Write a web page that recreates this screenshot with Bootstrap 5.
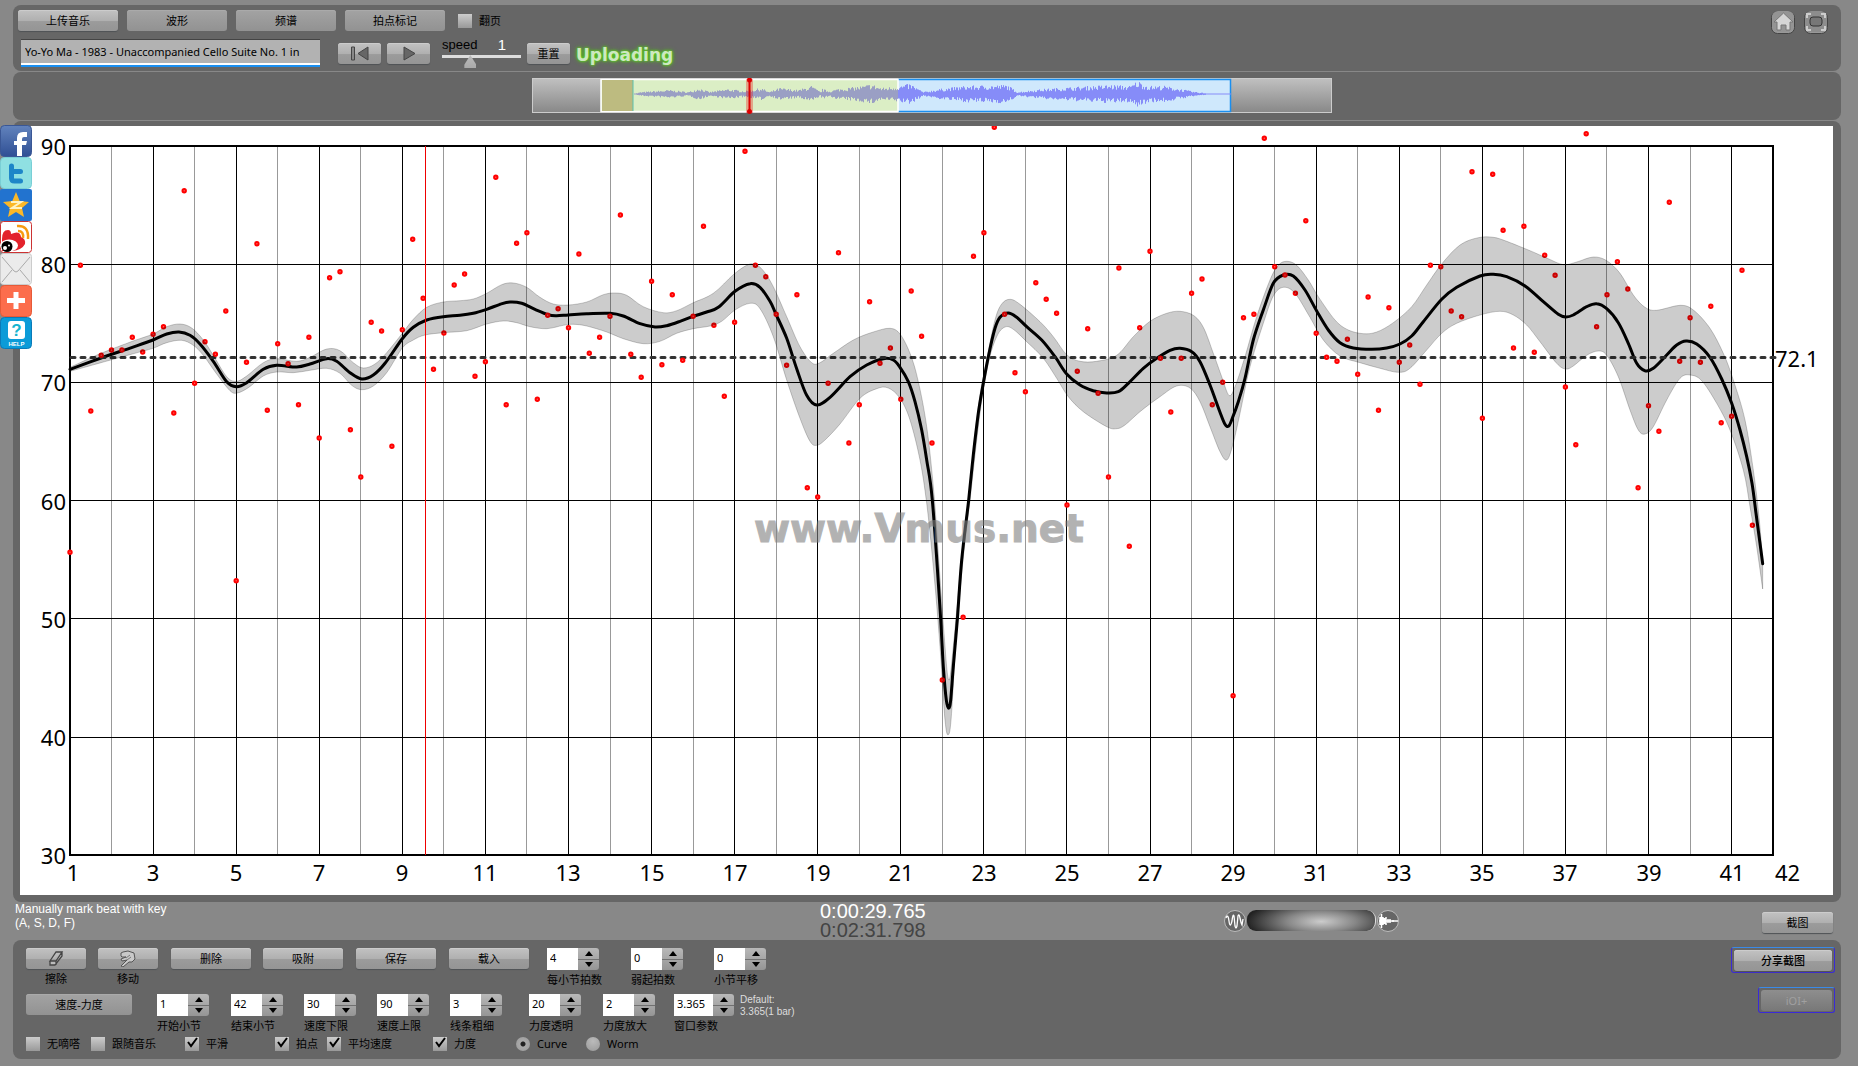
<!DOCTYPE html>
<html lang="zh-CN">
<head>
<meta charset="utf-8">
<meta name="viewport" content="width=device-width, initial-scale=1">
<title>Vmus.net</title>
<link rel="stylesheet" href="https://cdn.jsdelivr.net/npm/bootstrap@5.3.0/dist/css/bootstrap.min.css">
<style>
:root{--ui:"Noto Sans","Noto Sans CJK SC",sans-serif}
body{background:#888;font:11px/16px var(--ui);color:#000;padding:5px 17px 7px 13px}
.pane{background:#666;border-radius:8px}
.gbtn{height:21px;padding:0;border:0;border-radius:3px;font-size:11px;line-height:20px;color:#000;
 background:linear-gradient(#c2c2c2,#b0b0b0 50%,#9b9b9b 55%,#959595);box-shadow:inset 0 1px 0 #ccc,0 1px 1px #4f5356}
.gbtn:hover{color:#000;background:#c4c4c4}
.gbtn svg{display:block;margin:auto}
.gflat{background:linear-gradient(#a3a3a3,#929292);box-shadow:inset 0 1px 0 #aaa}
.w-main{width:100px}.w-tool{width:43px}.w-edit{width:80px}.w-pair{width:60px}.w-mode{width:106px}.w-shot{width:71px}
.gap-main{gap:9px}
.toprow{padding:5px 12px 0 5px}
.songrow{padding:8px 0 0 3px}
.song{width:299px;height:28px;border:0;border-top:1px solid #444;border-bottom:2px solid #1a8ff0;border-radius:0;background:#b2b2b2;
 padding:0 4px 2px;font-size:11px;color:#000;box-shadow:inset 0 -2px 0 #fff}
.song:focus{background:#bbb}
.transport{gap:6px;margin-left:18px}
.chk{width:14px;height:14px;margin:0;border:0;border-radius:0;background-color:#bbb;background-image:linear-gradient(#ccc,#999);flex:none}
.chk:checked{background-color:#bbb;background-image:linear-gradient(#ccc,#999)}
.form-check-input.chk[type=checkbox]{border-radius:0}
.chkwrap{position:relative;display:flex;flex:none}
.chkwrap svg{position:absolute;left:1px;top:-1px;display:none;pointer-events:none}
.chkwrap input:checked + svg{display:block}
.form-check-input.rad{width:14px;height:14px;margin:0;border:0;background-color:#aaa;background-image:radial-gradient(circle at 50% 30%,#bbb,#999)}
.form-check-input.rad:checked{background-color:#aaa;background-image:radial-gradient(circle,#222 0 2px,#aaa 3px,#999)}
.chklabel{margin-left:7px}
.spd{width:79px;height:28px;font:13px/14px "Liberation Sans",sans-serif;margin:-5px 0 0 6px}
.spd output{color:#fff;font-size:15px;margin-right:15px}
.spd input{appearance:none;-webkit-appearance:none;display:block;width:79px;height:16px;margin:0;background:linear-gradient(#ddd,#ddd) 0 3px/100% 3px no-repeat}
.spd input::-webkit-slider-thumb{-webkit-appearance:none;width:12px;height:13px;margin-top:3px;background:linear-gradient(#bbb,#aaa);clip-path:polygon(50% 0,100% 75%,100% 100%,0 100%,0 75%)}
.upl{font:bold 17px/24px "DejaVu Sans",sans-serif;color:#cde8c0;text-shadow:0 0 2px #5fd022,0 0 3px #5fd022,0 0 5px #4fb818}
.wavebox{height:48px;padding:6px 0 0 9px;margin-top:1px}
.wavebox svg,.plotbox svg{display:block}
.wavebox svg{width:800px}
.plotbox{padding:5px 8px 7px 7px;margin-top:1px}
.plotbox svg{width:100%;height:auto;background:#fff}
.share{position:absolute;left:0;top:125px;width:32px;z-index:2}
.share a,.share svg{display:block}
.mid{height:38px}
.hint{font:12px/14px "Liberation Sans",sans-serif;color:#fff;padding:0 0 0 2px}
.clock{font:20px/19px "Liberation Sans",sans-serif;color:#fff;left:807px}
.clock span{color:#444}
.zoomer{width:179px;margin-right:360px;padding-top:7px}
.zoomer input{appearance:none;-webkit-appearance:none;width:129px;height:21px;border-radius:9px;background:radial-gradient(ellipse 75px 22px at 58% 55%,#ccc,#888 45%,#222);border-right:1px solid #ddd;margin:1px 0 0}
.zoomer input::-webkit-slider-thumb{-webkit-appearance:none;width:1px;height:1px}
.zoomer svg{flex:none}
.shot{padding-top:10px}
.deck{padding:8px 6px 7px 13px;min-height:119px}
.deckgrid{display:grid;align-items:start}
.r-one{grid-template-columns:72px 73px 92px 93px 93px 98px 84px 83px 60px;height:46px}
.r-two{grid-template-columns:131px 74px 73px 73px 73px 79px 74px 71px 66px auto;height:42px}
.r-three{grid-template-columns:65px 94px 90px 52px 106px 83px 70px 70px;height:16px}
.cap{display:block;line-height:16px;margin-top:2px;white-space:nowrap}
.stp{width:52px;height:22px}
.stp-wide{width:60px}
.stp input{min-width:0;flex:1 1 0;border:0;border-radius:0;padding:0 3px 3px;font-size:11px;color:#000;background:#fff;appearance:textfield;-moz-appearance:textfield}
.stp input::-webkit-inner-spin-button{display:none}
.stp div{width:21px;height:22px;border-radius:0 3px 3px 0;overflow:hidden;background:linear-gradient(#b8b8b8,#959595)}
.stp button{flex:1;border:0;padding:0;background:none;display:flex;align-items:center;justify-content:center}
.stp button + button{border-top:1px solid #707070}
.dflt{font:10px/12px "Liberation Sans",sans-serif;color:#ddd}
.rings{margin-top:-1px}
.ring{border:1px solid #3a2ad8;border-top-color:#3a8ae8;border-radius:3px;padding:2px;height:26px}
.ring .gbtn{width:100%;display:block}
.ring-a{width:104px}.ring-b{width:77px;margin-top:14px}
.ring-a .gbtn{font-weight:500}
.ring-b .gbtn:disabled{background:linear-gradient(#8e8e8e,#787878);box-shadow:none;color:#a0a0a0;opacity:1}
</style>
</head>
<body>
<nav class="share" aria-label="分享">
 <a href="#" aria-label="Facebook"><svg width="32" height="32"><defs><linearGradient id="fb" x2="0" y2="1"><stop stop-color="#6283bd"/><stop offset="1" stop-color="#2f4f94"/></linearGradient></defs><rect x=".5" y=".5" width="31" height="31" rx="4" fill="url(#fb)" stroke="#3a5795"/><path d="M17 31V20h-3v-4h3v-3q0-6 6-6h4v5h-3q-2 0-2 2v2h5l-1 4h-4v11z" fill="#fff"/></svg></a>
 <a href="#" aria-label="Twitter"><svg width="32" height="32"><rect x=".5" y=".5" width="31" height="31" rx="4" fill="#8fe0e2" stroke="#79cfd6"/><path d="M11.500 9v12q0 3 3 3h6M11.500 14.500h9" fill="none" stroke="#1e86c8" stroke-width="5" stroke-linecap="round"/></svg></a>
 <a href="#" aria-label="Qzone"><svg width="32" height="32"><rect width="32" height="32" rx="2" fill="#2273cf"/><path d="M16 3l3.700 9L29 13l-7 6 2 9-8-5-8 5 2-9-7-6 9.300-1z" fill="#fbb829"/><path d="M11 13h10l-9 6h10" fill="none" stroke="#fff3c4" stroke-width="2"/></svg></a>
 <a href="#" aria-label="Weibo"><svg width="32" height="32"><rect x=".5" y=".5" width="31" height="31" rx="3" fill="#fff" stroke="#c33"/><path d="M2 18q0-9 6-9 3 0 3 4 7-3 9 0 1 2 1 3 5 2 4 7-3 6-13 7H2z" fill="#e3232c"/><ellipse cx="9" cy="24.500" rx="9" ry="6" fill="#fff"/><circle cx="7" cy="25.500" r="5.500" fill="#000"/><circle cx="5" cy="27" r="2" fill="#fff"/><circle cx="9" cy="24.500" r="1" fill="#fff"/><path d="M17 5q12-1 11 13M18 10q6 0 5 7" fill="none" stroke="#f79a10" stroke-width="2.500"/></svg></a>
 <a href="#" aria-label="Email"><svg width="32" height="32"><rect x=".5" y=".5" width="31" height="31" rx="3" fill="#ebebeb" stroke="#ccc"/><path d="M2 4l12 14q2 2 4 0L30 4M2 29l10-12M30 29L20 17" fill="none" stroke="#aaa"/></svg></a>
 <a href="#" aria-label="More"><svg width="32" height="32"><rect x=".5" y=".5" width="31" height="31" rx="4" fill="#fc6d4c" stroke="#e65a38"/><path d="M16 7v17M7 15.500h18" stroke="#fff" stroke-width="5"/></svg></a>
 <a href="#" aria-label="Help"><svg width="32" height="32"><rect x=".5" y=".5" width="31" height="31" rx="4" fill="#0b9bd8" stroke="#0a7ab8"/><rect x="8" y="4" width="17" height="18" rx="3" fill="#fff"/><text x="16.500" y="19" text-anchor="middle" font-family="Liberation Sans" font-weight="bold" font-size="17" fill="#15b4cf">?</text><text x="16.500" y="29" text-anchor="middle" font-family="Liberation Sans" font-weight="bold" font-size="6" fill="#fff">HELP</text></svg></a>
</nav>

<header class="pane pb-1">
 <div class="d-flex toprow">
  <div>
   <div class="d-flex gap-main">
    <button class="btn gbtn w-main">上传音乐</button>
    <button class="btn gbtn gflat w-main">波形</button>
    <button class="btn gbtn gflat w-main">频谱</button>
    <button class="btn gbtn gflat w-main">拍点标记</button>
    <div class="d-flex align-items-center ms-1"><input class="form-check-input chk" type="checkbox" id="flip"><label for="flip" class="chklabel">翻页</label></div>
   </div>
   <div class="d-flex songrow">
    <input class="form-control song" aria-label="Song" value="Yo-Yo Ma - 1983 - Unaccompanied Cello Suite No. 1 in">
    <div class="d-flex transport mt-1">
     <button class="btn gbtn w-tool" aria-label="Rewind"><svg width="22" height="17"><path d="M19 2v13L9 8.500z" fill="#666" stroke="#444"/><path d="M2.500 2h3v13h-3z" fill="#888" stroke="#444"/></svg></button>
     <button class="btn gbtn w-tool" aria-label="Play"><svg width="22" height="17"><path d="M6 2v13L17 8.500z" fill="#666" stroke="#444"/></svg></button>
     <div class="spd"><div class="d-flex justify-content-between align-items-center"><label for="speed">speed</label><output for="speed">1</output></div><input type="range" id="speed" min="0" max="3" step="0.1" value="1"></div>
     <button class="btn gbtn w-tool">重置</button>
     <div class="upl">Uploading</div>
    </div>
   </div>
  </div>
  <div class="ms-auto d-flex gap-2">
   <a href="#" aria-label="Home"><svg width="25" height="25"><rect x=".5" y="1.500" width="23" height="22" rx="6" fill="#999" stroke="#444"/><rect x="1" y="1" width="22" height="21" rx="6" fill="#949494"/><path d="M3 12L12.500 3 22 12h-3v8h-4v-5h-5v5H6v-8z" fill="#d5d5d5" stroke="#777"/></svg></a>
   <a href="#" aria-label="Fullscreen"><svg width="25" height="25"><rect x=".5" y="1.500" width="23" height="22" rx="6" fill="#999" stroke="#444"/><rect x="1" y="1" width="22" height="21" rx="6" fill="#8d8d8d"/><path d="M3 8V4h4M17 4h4v4M3 16v4h4M17 20h4v-4" fill="none" stroke="#ccc" stroke-width="2"/><rect x="6" y="7" width="12" height="9" rx="3" fill="#777" stroke="#333"/></svg></a>
  </div>
 </div>
</header>

<section class="pane wavebox d-flex justify-content-center">
 <svg viewBox="0 0 800 36" height="36" id="wave"><defs><linearGradient id="wg" x2="0" y2="1"><stop stop-color="#c0c0c0"/><stop offset="1" stop-color="#888"/></linearGradient></defs>
 <rect x=".5" y=".5" width="799" height="34" fill="url(#wg)" stroke="#ccc"/>
 <rect x="366" y="1" width="333" height="33" fill="#cfe8fc"/>
 <path d="M366 1.500h332.500v32H366" fill="none" stroke="#1a8ff0" stroke-width="1.500"/>
 <rect x="69" y="1.500" width="297" height="32" fill="#dbeec5" stroke="#fff" stroke-width="1.500"/>
 <rect x="70" y="2" width="31" height="31" fill="#bdbb80"/><path d="M101 2v31" stroke="#5bbfae"/>
 </svg>
</section>

<main class="pane plotbox"><svg viewBox="20 126 1813 769" id="plot" role="img" aria-label="Tempo curve"></svg></main>

<div class="mid d-flex position-relative">
 <div class="hint">Manually mark beat with key<br>(A, S, D, F)</div>
 <div class="clock position-absolute">0:00:29.765<br><span>0:02:31.798</span></div>
 <div class="zoomer ms-auto d-flex align-items-start">
  <svg width="24" height="24"><circle cx="12" cy="12" r="10.500" fill="#666" stroke="#bbb"/><path d="M3 9q2-5 3 3t3 0q1-8 2-5l1 10q1 4 2 0l1-10q1-3 2 2t2 7l1-6" fill="none" stroke="#fff" stroke-width="1.300"/></svg>
  <input type="range" aria-label="Zoom">
  <svg width="24" height="24"><circle cx="12" cy="12" r="10.500" fill="#666" stroke="#bbb"/><path d="M3 12h19M4 8v8M5.500 5v14M7 8v8M8.500 9v6M10 8v8M12 10v4M14 10v4M17 11v2" stroke="#fff" stroke-width="1.500"/></svg>
 </div>
 <div class="shot me-2"><button class="btn gbtn w-shot">截图</button></div>
</div>

<footer class="pane deck d-flex justify-content-between">
 <div>
  <div class="deckgrid r-one">
   <div class="w-pair text-center"><button class="btn gbtn w-pair" id="erase"><svg width="20" height="17"><path d="M4 11L10 2h6l-6 9zM4 11v4h5l7-9V2M10 11v4" fill="#bbb" stroke="#444" stroke-width="1.300"/></svg></button><label class="cap" for="erase">擦除</label></div>
   <div class="w-pair text-center"><button class="btn gbtn w-pair" id="move"><svg width="20" height="17"><path d="M3 6q-1-4 2-4l5-1 6 2 1 6-3 3-3 0-6 5-2-1 6-6-5 1-1-2 5-2-4 0z" fill="#c8c8c8" stroke="#555"/><path d="M9 10l4-3M8 8l4-3" stroke="#777" fill="none"/></svg></button><label class="cap" for="move">移动</label></div>
   <button class="btn gbtn w-edit">删除</button><button class="btn gbtn w-edit">吸附</button><button class="btn gbtn w-edit">保存</button><button class="btn gbtn w-edit">载入</button>
   <div data-step="4" data-cap="每小节拍数"></div><div data-step="0" data-cap="弱起拍数"></div><div data-step="0" data-cap="小节平移"></div>
  </div>
  <div class="deckgrid r-two">
   <button class="btn gbtn gflat w-mode">速度-力度</button>
   <div data-step="1" data-cap="开始小节"></div><div data-step="42" data-cap="结束小节"></div><div data-step="30" data-cap="速度下限"></div><div data-step="90" data-cap="速度上限"></div><div data-step="3" data-cap="线条粗细"></div><div data-step="20" data-cap="力度透明"></div><div data-step="2" data-cap="力度放大"></div><div data-step="3.365" data-cap="窗口参数"></div>
   <div class="dflt">Default:<br>3.365(1 bar)</div>
  </div>
  <div class="deckgrid r-three" id="checks"></div>
 </div>
 <div class="rings d-flex flex-column align-items-end">
  <div class="ring ring-a"><button class="btn gbtn">分享截图</button></div>
  <div class="ring ring-b"><button class="btn gbtn" disabled>iOI+</button></div>
 </div>
</footer>

<script src="https://cdn.jsdelivr.net/npm/bootstrap@5.3.0/dist/js/bootstrap.bundle.min.js"></script>
<script>
// Number steppers
document.querySelectorAll('[data-step]').forEach((el,i)=>{
 const v=el.dataset.step, wide=v.length>3?' stp-wide':'';
 el.innerHTML=`<div class="stp${wide} d-flex"><input type="number" step="any" id="n${i}" value="${v}"><div class="d-flex flex-column"><button aria-label="+"><svg width="8" height="5"><path d="M4 0l4 5H0z"/></svg></button><button aria-label="-"><svg width="8" height="5"><path d="M4 5l4-5H0z"/></svg></button></div></div><label class="cap" for="n${i}">${el.dataset.cap}</label>`;
 const inp=el.querySelector('input'), b=el.querySelectorAll('button');
 b[0].onclick=()=>inp.value=+inp.value+1; b[1].onclick=()=>inp.value=+inp.value-1;
});
// Display options
[['无嘀嗒',0],['跟随音乐',0],['平滑',1],['拍点',1],['平均速度',1],['力度',1],['Curve',1,'r'],['Worm',0,'r']].forEach(([t,on,r],i)=>{
 document.getElementById('checks').insertAdjacentHTML('beforeend',`<div class="d-flex align-items-center"><span class="chkwrap"><input class="form-check-input ${r?'rad':'chk'}" ${r?'type="radio" name="style"':'type="checkbox"'} id="o${i}" ${on?'checked':''}>${r?'':'<svg width="14" height="13"><path d="M2 6l3 4 6-8" fill="none" stroke="#000" stroke-width="2"/></svg>'}</span><label for="o${i}" class="chklabel">${t}</label></div>`);
});
// Waveform: envelope control points (x, half height)
const env=[[102,.5],[109,2],[137,4],[156,2],[167,6],[177,2],[195,5],[213,3],[229,6],[237,2],[247,6],[266,4],[279,8],[288,2],[290,5],[297,3],[305,5],[331,8],[339,10],[349,6],[367,8],[378,10],[391,2],[407,5],[433,8],[475,9],[485,2],[511,5],[543,7],[579,9],[598,8],[605,13],[616,8],[632,8],[648,5],[663,2],[673,1],[674,.5],[699,.5]];
let seed=7,rnd=()=>(seed=(seed*16807)%2147483647)/2147483647;
let wl='',wr='';
for(let x=102;x<699;x++){
 const j=env.findIndex(p=>p[0]>=x),b=env[j],a=env[Math.max(0,j-1)];
 const e=a[1]+(b[1]-a[1])*((x-a[0])/((b[0]-a[0])||1)),h=Math.max(.5,e*(x>673?1:.45+.6*rnd())),g=Math.max(.5,e*(x>673?1:.45+.6*rnd()));
 const s=`M${x+.5} ${(16-h).toFixed(1)}V${(16+g).toFixed(1)}`;
 x<366?wl+=s:wr+=s;
}
document.getElementById('wave').insertAdjacentHTML('beforeend',`<path d="${wl}" stroke="#9a9fc4"/><path d="${wr}" stroke="#868cf8"/><path d="M217.500 1v34" stroke="#e00" stroke-opacity=".3" stroke-width="7"/><path d="M217.500 1v34" stroke="#d00" stroke-width="2"/><circle cx="217.500" cy="2" r="2.500" fill="#d00"/><circle cx="217.500" cy="33.500" r="2.500" fill="#d00"/>`);

// Tempo plot. Data are in thirds of a plot unit, measured from y = 120
const beats=[1297,436,873,706,690,690,652,696,643,620,879,212,790,665,703,573,1382,727,371,871,671,731,854,652,954,473,455,929,1071,607,633,979,629,358,535,748,639,495,462,769,725,172,854,370,338,838,586,566,623,402,700,652,589,285,703,772,484,734,524,721,589,319,616,829,607,94,436,470,583,736,524,1103,1131,790,398,969,854,545,730,684,838,513,649,969,1680,null,1492,409,338,22,583,758,815,488,538,580,1155,754,626,820,1071,444,1279,623,394,715,876,715,520,477,854,787,1727,593,583,55,440,465,520,302,640,712,724,658,763,531,871,563,727,675,793,436,440,573,590,155,895,163,331,684,319,697,406,466,801,974,41,620,524,425,507,1103,857,934,247,724,593,727,559,908,889,451,1216];
const mean=[210,748,303,714,397,682,459,660,500,642,537,636,570,646,600,672,640,724,680,785,709,800,740,788,790,748,830,736,890,741,930,732,980,716,1010,724,1050,758,1085,777,1120,765,1155,730,1207,656,1240,622,1280,600,1330,590,1380,586,1420,580,1460,568,1500,553,1530,546,1565,550,1605,568,1645,584,1670,587,1705,585,1760,581,1830,580,1870,588,1920,611,1965,621,2000,617,2040,604,2080,589,2120,576,2155,562,2205,514,2250,491,2280,502,2310,544,2328,583,2360,655,2390,746,2420,826,2450,855,2490,832,2550,770,2600,735,2650,716,2680,720,2700,742,2725,785,2745,845,2765,930,2780,1020,2797,1140,2820,1465,2830,1640,2839,1740,2846,1765,2852,1740,2860,1640,2872,1500,2885,1320,2906,1140,2920,1005,2935,880,2950,790,2966,705,2985,625,3000,592,3025,579,3050,592,3080,620,3125,660,3165,710,3200,762,3240,795,3280,812,3320,819,3355,815,3385,790,3430,745,3470,715,3510,691,3540,685,3575,695,3600,725,3630,795,3660,877,3675,913,3686,918,3697,895,3715,845,3735,775,3760,660,3790,570,3820,490,3850,465,3880,468,3915,510,3950,573,3985,630,4020,668,4060,684,4115,688,4160,684,4200,672,4235,648,4270,605,4325,538,4370,502,4440,468,4480,463,4520,470,4575,498,4630,545,4675,583,4697,591,4720,585,4760,560,4790,551,4820,566,4855,608,4885,670,4910,730,4935,752,4960,745,5000,705,5030,675,5058,663,5090,672,5130,712,5165,777,5195,850,5220,930,5240,1010,5256,1090,5268,1180,5280,1270,5288,1331];
const hi=[210,742,303,700,397,664,459,642,500,620,540,612,575,624,610,660,640,706,680,770,709,784,740,768,790,728,830,716,890,724,930,712,980,687,1020,692,1060,728,1090,744,1125,732,1160,698,1207,640,1240,598,1280,562,1330,546,1380,542,1420,537,1460,520,1505,494,1540,489,1580,502,1620,532,1660,552,1705,555,1760,546,1810,524,1845,519,1880,526,1930,560,1990,578,2030,572,2080,548,2140,520,2200,464,2240,436,2265,433,2290,452,2320,500,2360,590,2400,680,2435,728,2460,728,2500,700,2560,660,2620,636,2670,625,2700,642,2730,700,2755,785,2780,920,2800,1100,2815,1300,2832,1540,2846,1680,2860,1580,2885,1310,2906,1130,2935,860,2960,720,2985,600,3005,552,3030,538,3060,553,3120,605,3160,650,3200,704,3240,724,3290,724,3350,706,3400,650,3450,604,3500,580,3540,574,3580,586,3610,622,3640,700,3665,770,3687,826,3705,800,3735,710,3770,590,3810,480,3835,436,3860,424,3890,436,3925,480,3955,530,4005,600,4045,630,4090,641,4130,636,4180,608,4235,560,4280,495,4325,432,4380,375,4435,353,4480,352,4520,364,4590,392,4640,414,4690,434,4730,426,4780,411,4820,422,4860,460,4900,525,4935,562,4970,571,5040,556,5080,570,5130,625,5170,700,5200,780,5235,900,5260,1050,5278,1200,5288,1331];
const lo=[210,754,303,728,397,702,459,685,500,668,545,661,580,676,610,706,650,762,690,812,712,819,745,803,790,768,830,756,880,758,930,751,980,745,1020,760,1055,796,1085,809,1120,798,1160,758,1207,684,1240,660,1275,645,1330,638,1400,632,1460,612,1510,603,1550,608,1590,620,1640,626,1690,616,1720,613,1760,618,1820,636,1870,656,1930,671,1980,664,2030,640,2080,626,2130,618,2165,604,2205,570,2250,550,2280,566,2320,650,2360,780,2400,895,2430,964,2450,976,2475,960,2520,912,2580,835,2630,806,2665,804,2700,835,2730,900,2760,1020,2780,1150,2800,1340,2820,1580,2835,1800,2845,1844,2854,1790,2868,1560,2888,1330,2910,1140,2940,880,2965,730,2990,650,3015,621,3040,628,3080,665,3130,715,3170,775,3205,830,3250,875,3320,920,3350,926,3375,915,3420,875,3480,830,3530,798,3570,804,3600,845,3630,920,3660,995,3680,1020,3697,980,3720,880,3750,740,3790,610,3820,528,3850,502,3885,520,3930,592,3970,660,4020,708,4080,728,4140,745,4195,757,4230,745,4280,690,4325,640,4370,610,4440,585,4500,574,4540,585,4580,615,4620,665,4670,730,4697,747,4720,738,4760,706,4795,693,4820,706,4855,770,4890,870,4915,930,4935,942,4960,920,5000,840,5040,775,5070,765,5105,782,5150,850,5190,930,5230,1050,5250,1160,5270,1280,5288,1407];
const pts=a=>{const r=[];for(let i=0;i<a.length;i+=2)r.push([a[i]/3,120+a[i+1]/3]);return r};
const spline=p=>{let s='';for(let i=0;i<p.length-1;i++){const a=p[Math.max(0,i-1)],b=p[i],c=p[i+1],d=p[Math.min(p.length-1,i+2)];
 s+=`C${[b[0]+(c[0]-a[0])/6,b[1]+(c[1]-a[1])/6,c[0]-(d[0]-b[0])/6,c[1]-(d[1]-b[1])/6,c[0],c[1]].map(n=>n.toFixed(1)).join(' ')}`}return s};
const X=m=>70+41.54*(m-1),Y=v=>146+(90-v)*11.82;
let g='',t='';
for(let m=2;m<42;m++)g+=`<path d="M${Math.floor(X(m))+.5} 146V855" stroke="${m%2?'#000':'#999'}" shape-rendering="crispEdges"/>`;
for(let v=40;v<90;v+=10)g+=`<path d="M70 ${Math.floor(Y(v))+.5}H1773" stroke="#000" shape-rendering="crispEdges"/>`;
for(let v=30;v<=90;v+=10)t+=`<text x="66" y="${Math.round(Y(v))+9}" text-anchor="end">${v}</text>`;
for(let m=1;m<42;m+=2)t+=`<text x="${Math.max(73,Math.round(X(m)))}" y="881" text-anchor="middle">${m}</text>`;
t+=`<text x="1775" y="881">42</text><text x="1775" y="367">72.1</text>`;
const H=pts(hi),L=pts(lo).reverse(),M=pts(mean);
const dots=beats.map((b,k)=>b===null?'':`<circle cx="${(70+10.385*k).toFixed(1)}" cy="${(120+b/3).toFixed(1)}" r="1.700"/>`).join('');
document.getElementById('plot').innerHTML=g+
`<rect x="70" y="146" width="1703" height="709" fill="none" stroke="#000" stroke-width="2"/>
<path d="M${M[0]}${spline(M)}" fill="none" stroke="#000" stroke-width="3" stroke-linecap="round"/>
<path d="M71 357.500H1776" stroke="#333" stroke-width="3" stroke-dasharray="4 6" stroke-linecap="round"/>
<g fill="#f66" stroke="#f00" stroke-width="2">${dots}</g>
<path d="M${H[0]}${spline(H)}L${L[0]}${spline(L)}Z" fill="#000" fill-opacity=".2" stroke="#000" stroke-opacity=".2"/>
<path d="M425.500 146V855" stroke="#e00" shape-rendering="crispEdges"/>
<text x="754" y="542" font-family="DejaVu Sans" font-weight="bold" font-size="39" fill="#808080" stroke="#808080" opacity=".6">www.Vmus.net</text>
<g font-family="Noto Sans" font-size="22" fill="#000">${t}</g>`;
</script>
</body>
</html>
